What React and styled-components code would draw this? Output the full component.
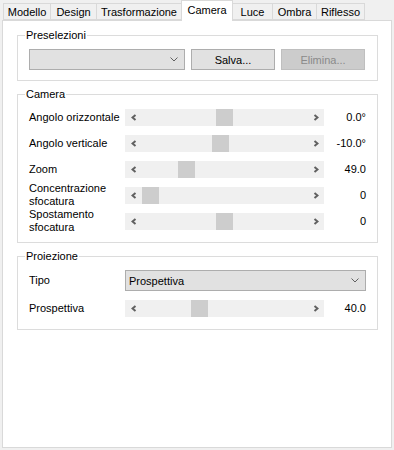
import styled, { createGlobalStyle } from "styled-components";

const GlobalStyle = createGlobalStyle`
  html, body {
    margin: 0;
    background-color: #f0f0f0;
  }
  body {
    font-family: "Liberation Sans", Arial, sans-serif;
    font-size: 11px;
    color: #000000;
  }
`;

const tabs = [
  { label: "Modello", width: 48 },
  { label: "Design", width: 47 },
  { label: "Trasformazione", width: 86 },
  { label: "Camera", width: 52, active: true },
  { label: "Luce", width: 41 },
  { label: "Ombra", width: 45 },
  { label: "Riflesso", width: 49 },
];

const cameraRows = [
  { label: "Angolo orizzontale", pos: 0.5, value: "0.0°" },
  { label: "Angolo verticale", pos: 0.473, value: "-10.0°" },
  { label: "Zoom", pos: 0.243, value: "49.0" },
  { label: "Concentrazione sfocatura", pos: 0, value: "0" },
  { label: "Spostamento sfocatura", pos: 0.5, value: "0" },
];

function Chevron({ dir }) {
  const points = dir === "left" ? "4.5,1 1.5,3.5 4.5,6" : "1.5,1 4.5,3.5 1.5,6";
  return (
    <svg width="6" height="7" viewBox="0 0 6 7">
      <polyline points={points} fill="none" stroke="#606060" strokeWidth="2" />
    </svg>
  );
}

function DownArrow() {
  return (
    <svg width="8" height="5" viewBox="0 0 8 5">
      <polyline points="0.5,0.5 4,4 7.5,0.5" fill="none" stroke="#606060" strokeWidth="1" />
    </svg>
  );
}

function Slider({ pos }) {
  return (
    <Track>
      <ArrowBtn>
        <Chevron dir="left" />
      </ArrowBtn>
      <Thumb style={{ left: `calc(17px + (100% - 51px) * ${pos})` }} />
      <ArrowBtn>
        <Chevron dir="right" />
      </ArrowBtn>
    </Track>
  );
}

function Combo({ text, $wide }) {
  return (
    <ComboBox $wide={$wide}>
      <span>{text}</span>
      <DownArrow />
    </ComboBox>
  );
}

export default function App() {
  return (
    <>
      <GlobalStyle />
      <Window>
        <TabStrip>
          {tabs.map((t) => (
            <Tab key={t.label} $width={t.width} $active={t.active}>
              {t.label}
            </Tab>
          ))}
        </TabStrip>
        <Panel>
          <Group>
            <Legend>Preselezioni</Legend>
            <PresetRow>
              <Combo text="" />
              <Button>Salva...</Button>
              <Button disabled>Elimina...</Button>
            </PresetRow>
          </Group>

          <Group>
            <Legend>Camera</Legend>
            <Grid>
              {cameraRows.map((r) => (
                <Row key={r.label}>
                  <Label>{r.label}</Label>
                  <Slider pos={r.pos} />
                  <Value>{r.value}</Value>
                </Row>
              ))}
            </Grid>
          </Group>

          <Group>
            <Legend>Proiezione</Legend>
            <Grid>
              <ComboRow>
                <Label>Tipo</Label>
                <Combo text="Prospettiva" $wide />
              </ComboRow>
              <Row>
                <Label>Prospettiva</Label>
                <Slider pos={0.331} />
                <Value>40.0</Value>
              </Row>
            </Grid>
          </Group>
        </Panel>
      </Window>
    </>
  );
}

const Window = styled.div`
  width: 394px;
  height: 450px;
  box-sizing: border-box;
  padding: 0 2px 2px 2px;
  display: flex;
  flex-direction: column;
`;

const TabStrip = styled.div`
  display: flex;
  align-items: flex-end;
  height: 20px;
  padding-left: 1px;
  position: relative;
  z-index: 1;
`;

const Tab = styled.div`
  box-sizing: border-box;
  width: ${(p) => p.$width}px;
  height: ${(p) => (p.$active ? 21 : 17)}px;
  margin-right: -1px;
  margin-bottom: ${(p) => (p.$active ? -1 : 0)}px;
  border: 1px solid #d9d9d9;
  border-bottom: ${(p) => (p.$active ? "none" : "1px solid #d9d9d9")};
  background-color: ${(p) => (p.$active ? "#ffffff" : "#f0f0f0")};
  display: flex;
  align-items: center;
  justify-content: center;
  padding-bottom: ${(p) => (p.$active ? 3 : 0)}px;
  white-space: nowrap;
  position: relative;
  z-index: ${(p) => (p.$active ? 2 : 1)};
`;

const Panel = styled.div`
  flex: 1;
  box-sizing: border-box;
  background-color: #ffffff;
  border: 1px solid #d9d9d9;
  padding: 14px 13px 0 14px;
  display: flex;
  flex-direction: column;
  gap: 13px;
`;

const Group = styled.div`
  position: relative;
  border: 1px solid #dcdcdc;
  padding: 0 11px 0 11px;
`;

const Legend = styled.span`
  position: absolute;
  top: -7px;
  left: 7px;
  padding: 0 1px;
  line-height: 13px;
  background-color: #ffffff;
`;

const PresetRow = styled.div`
  display: flex;
  gap: 6px;
  padding: 13px 0 10px 0;
`;

const ComboBox = styled.div`
  box-sizing: border-box;
  width: ${(p) => (p.$wide ? "241px" : "156px")};
  height: 21px;
  background-color: #e1e1e1;
  border: 1px solid #adadad;
  display: flex;
  align-items: center;
  justify-content: space-between;
  padding: 0 6px 0 3px;
`;

const Button = styled.button`
  box-sizing: border-box;
  width: 84px;
  height: 21px;
  margin: 0;
  padding: 0;
  font-family: inherit;
  font-size: 11px;
  color: #000000;
  background-color: #e1e1e1;
  border: 1px solid #adadad;

  &:disabled {
    color: #8a8a8a;
    background-color: #cccccc;
    border-color: #bfbfbf;
  }
`;

const Grid = styled.div`
  display: flex;
  flex-direction: column;
  padding: 9px 0 8px 0;
`;

const Row = styled.div`
  display: grid;
  grid-template-columns: 96px 199px 42px;
  height: 26px;
  align-items: center;
`;

const ComboRow = styled.div`
  display: grid;
  grid-template-columns: 96px 241px;
  height: 21px;
  margin: 4px 0 4px 0;
  align-items: center;
`;

const Label = styled.div`
  line-height: 13px;
`;

const Track = styled.div`
  position: relative;
  height: 17px;
  background-color: #f0f0f0;
  display: flex;
  justify-content: space-between;
`;

const ArrowBtn = styled.div`
  width: 17px;
  height: 17px;
  display: flex;
  align-items: center;
  justify-content: center;
`;

const Thumb = styled.div`
  position: absolute;
  top: 0;
  width: 17px;
  height: 17px;
  background-color: #cdcdcd;
`;

const Value = styled.div`
  text-align: right;
`;
